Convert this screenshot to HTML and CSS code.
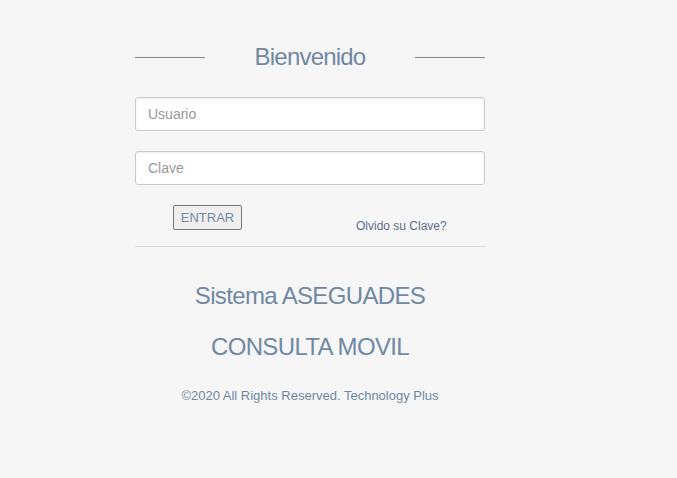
FILE: index.html
```html
<!DOCTYPE html>
<html lang="es">
<head>
<meta charset="utf-8">
<title>Bienvenido</title>
<link rel="stylesheet" href="styles.css">
</head>
<body>
<div class="login">
  <div class="title-row">
    <span class="rule"></span>
    <h1 class="title">Bienvenido</h1>
    <span class="rule"></span>
  </div>
  <form class="form">
    <input class="field" type="text" placeholder="Usuario">
    <input class="field" type="password" placeholder="Clave">
    <div class="actions">
      <button class="btn" type="button">ENTRAR</button>
      <a class="forgot" href="#">Olvido su Clave?</a>
    </div>
  </form>
  <hr class="divider">
  <h2 class="system">Sistema ASEGUADES</h2>
  <h2 class="system">CONSULTA MOVIL</h2>
  <p class="copy">©2020 All Rights Reserved. Technology Plus</p>
</div>
</body>
</html>
```
FILE: styles.css
```css
html, body {
  margin: 0;
  padding: 0;
  background: #f6f6f6;
  height: 100%;
}
body {
  font-family: "Liberation Sans", Arial, sans-serif;
  color: #708296;
}
.login {
  width: 350px;
  margin-left: 135px;
  padding-top: 42px;
}
.title-row {
  display: flex;
  align-items: center;
  justify-content: space-between;
  height: 30px;
}
.rule {
  width: 70px;
  height: 1px;
  background: #888;
}
.title {
  margin: 0;
  font-weight: normal;
  font-size: 24px;
  letter-spacing: -0.8px;
  line-height: 30px;
  color: #7088a4;
}
.form {
  display: flex;
  flex-direction: column;
  margin-top: 25px;
}
.field {
  box-sizing: border-box;
  height: 34px;
  width: 100%;
  margin: 0 0 20px;
  padding: 6px 12px;
  border: 1px solid #ccc;
  border-radius: 3px;
  background: #fff;
  box-shadow: inset 0 1px 2px rgba(0,0,0,0.08);
  font-family: "Liberation Sans", Arial, sans-serif;
  font-size: 14px;
  color: #555;
}
.field::placeholder {
  color: #999;
}
.actions {
  display: flex;
  align-items: flex-start;
  padding-left: 38px;
  height: 41px;
}
.btn {
  box-sizing: border-box;
  height: 25px;
  width: 69px;
  padding: 0;
  border: 1px solid #777;
  border-radius: 2px;
  background: #efefef;
  font-family: "Liberation Sans", Arial, sans-serif;
  font-size: 13px;
  color: #7488a2;
}
.forgot {
  margin-left: 114px;
  margin-top: 14px;
  font-size: 12px;
  color: #5b6f8a;
  text-decoration: none;
}
.divider {
  margin: 0;
  border: 0;
  border-top: 1px solid #ddd;
}
.system {
  margin: 0;
  font-weight: normal;
  font-size: 24px;
  letter-spacing: -0.65px;
  text-align: center;
  color: #7088a4;
  line-height: 30px;
}
.system:first-of-type {
  margin-top: 34px;
}
.system + .system {
  margin-top: 21px;
}
.copy {
  margin: 26px 0 0;
  text-align: center;
  font-size: 13px;
  color: #7088a4;
}
```
